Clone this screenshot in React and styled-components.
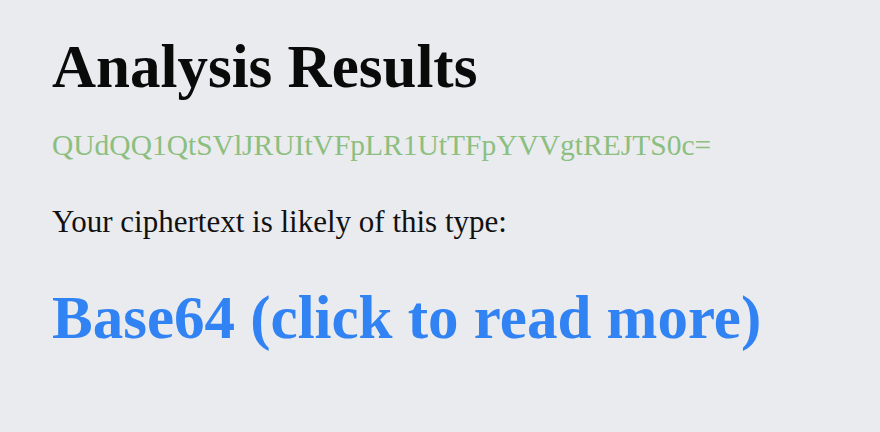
import React from "react";
import styled, { createGlobalStyle } from "styled-components";

const GlobalStyle = createGlobalStyle`
  html, body {
    margin: 0;
    padding: 0;
    background: #eaebef;
  }
  body {
    font-family: "Liberation Serif", "DejaVu Serif", serif;
    color: #111;
  }
`;

const Page = styled.div`
  width: 880px;
  height: 432px;
  box-sizing: border-box;
  padding: 32px 52px;
  display: flex;
  flex-direction: column;
`;

const Title = styled.h1`
  margin: 0;
  font-size: 61px;
  line-height: 70px;
  font-weight: 700;
  color: #0a0a0a;
`;

const Cipher = styled.div`
  margin-top: 25px;
  font-size: 29.5px;
  line-height: 36px;
  color: #8cbf7f;
`;

const Label = styled.p`
  margin: 41px 0 0;
  font-size: 31px;
  line-height: 36px;
  color: #111;
`;

const TypeLink = styled.a`
  align-self: flex-start;
  margin-top: 43px;
  font-size: 61px;
  line-height: 70px;
  font-weight: 700;
  color: #3182f2;
  text-decoration: none;
  cursor: pointer;
`;

export default function App() {
  return (
    <>
      <GlobalStyle />
      <Page>
        <Title>Analysis Results</Title>
        <Cipher>QUdQQ1QtSVlJRUItVFpLR1UtTFpYVVgtREJTS0c=</Cipher>
        <Label>Your ciphertext is likely of this type:</Label>
        <TypeLink href="#">Base64 (click to read more)</TypeLink>
      </Page>
    </>
  );
}
